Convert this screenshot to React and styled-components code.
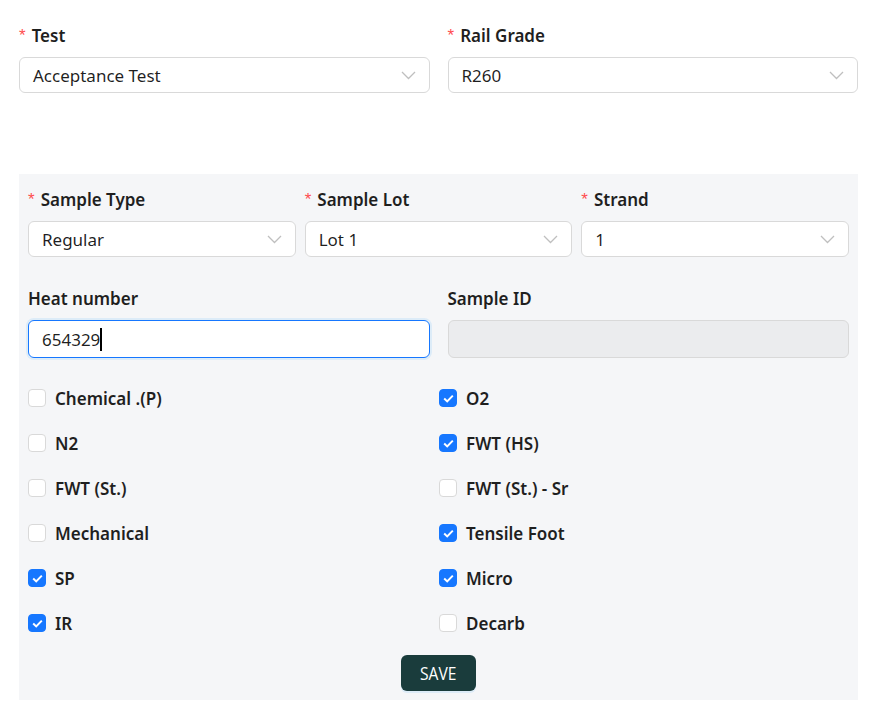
import React from "react";
import styled, { createGlobalStyle } from "styled-components";

const GlobalStyle = createGlobalStyle`
  body {
    margin: 0;
    background: #ffffff;
    font-family: "Noto Sans", "Open Sans", sans-serif;
    color: rgba(0, 0, 0, 0.88);
  }
`;

const checks = [
  { label: "Chemical .(P)", checked: false },
  { label: "O2", checked: true },
  { label: "N2", checked: false },
  { label: "FWT (HS)", checked: true },
  { label: "FWT (St.)", checked: false },
  { label: "FWT (St.) - Sr", checked: false },
  { label: "Mechanical", checked: false },
  { label: "Tensile Foot", checked: true },
  { label: "SP", checked: true },
  { label: "Micro", checked: true },
  { label: "IR", checked: true },
  { label: "Decarb", checked: false },
];

const Chevron = () => (
  <svg width="15" height="14" viewBox="0 0 15 14">
    <polyline
      points="1,4 7.5,10.5 14,4"
      fill="none"
      stroke="#bfbfbf"
      strokeWidth="1.3"
    />
  </svg>
);

const Field = ({ label, required, children }) => (
  <FieldWrap>
    <Label>
      {required && <Star>*</Star>}
      {label}
    </Label>
    {children}
  </FieldWrap>
);

const Select = ({ value }) => (
  <SelectBox>
    <span>{value}</span>
    <Chevron />
  </SelectBox>
);

const Check = ({ label, checked }) => (
  <CheckRow>
    <Box checked={checked}>
      {checked && (
        <svg width="11" height="9" viewBox="0 0 11 9">
          <polyline
            points="1.2,4.6 4.2,7.4 9.8,1.6"
            fill="none"
            stroke="#fff"
            strokeWidth="2"
          />
        </svg>
      )}
    </Box>
    <CheckLabel>{label}</CheckLabel>
  </CheckRow>
);

const App = () => (
  <>
    <GlobalStyle />
    <Page>
      <TopRow>
        <Field label="Test" required>
          <Select value="Acceptance Test" />
        </Field>
        <Field label="Rail Grade" required>
          <Select value="R260" />
        </Field>
      </TopRow>

      <Panel>
        <ThreeRow>
          <Field label="Sample Type" required>
            <Select value="Regular" />
          </Field>
          <Field label="Sample Lot" required>
            <Select value="Lot 1" />
          </Field>
          <Field label="Strand" required>
            <Select value="1" />
          </Field>
        </ThreeRow>

        <TwoRow>
          <Field label="Heat number">
            <InputBox focused>
              654329
              <Caret />
            </InputBox>
          </Field>
          <Field label="Sample ID">
            <InputBox disabled />
          </Field>
        </TwoRow>

        <CheckGrid>
          {checks.map((c) => (
            <Check key={c.label} label={c.label} checked={c.checked} />
          ))}
        </CheckGrid>

        <Actions>
          <SaveButton>
            <span>SAVE</span>
          </SaveButton>
        </Actions>
      </Panel>
    </Page>
  </>
);

const Page = styled.div`
  width: 839px;
  padding: 24px 37px 0 19px;
`;

const TopRow = styled.div`
  display: grid;
  grid-template-columns: 1fr 1fr;
  gap: 18px;
`;

const FieldWrap = styled.div`
  display: flex;
  flex-direction: column;
`;

const Label = styled.div`
  display: flex;
  align-items: center;
  height: 22px;
  margin-bottom: 11px;
  font-size: 17px;
  font-weight: 600;
  color: #1f1f1f;
`;

const Star = styled.span`
  color: #ff4d4f;
  font-family: "Liberation Sans", sans-serif;
  font-weight: 400;
  font-size: 17px;
  margin-right: 6px;
  position: relative;
  top: 1px;
`;

const SelectBox = styled.div`
  display: flex;
  align-items: center;
  justify-content: space-between;
  box-sizing: border-box;
  height: 36px;
  padding: 0 13px 0 13px;
  background: #ffffff;
  border: 1px solid #d9d9d9;
  border-radius: 6px;
  font-size: 17px;
  color: rgba(0, 0, 0, 0.88);
`;

const Panel = styled.div`
  margin-top: 81px;
  background: #f5f6f8;
  padding: 14px 9px 9px 9px;
`;

const ThreeRow = styled.div`
  display: grid;
  grid-template-columns: 1fr 1fr 1fr;
  gap: 9px;
`;

const TwoRow = styled.div`
  display: grid;
  grid-template-columns: 1fr 1fr;
  gap: 18px;
  margin-top: 30px;
`;

const InputBox = styled.div`
  display: flex;
  align-items: center;
  box-sizing: border-box;
  height: 38px;
  padding: 0 13px;
  font-size: 17px;
  border-radius: 6px;
  border: 1px solid ${(p) => (p.focused ? "#1677ff" : "#d9d9d9")};
  background: ${(p) => (p.disabled ? "#ebecee" : "#ffffff")};
  box-shadow: ${(p) => (p.focused ? "0 0 0 2px rgba(5, 145, 255, 0.1)" : "none")};
  color: rgba(0, 0, 0, 0.88);
`;

const Caret = styled.span`
  display: inline-block;
  width: 2px;
  height: 23px;
  background: #000;
`;

const CheckGrid = styled.div`
  display: grid;
  grid-template-columns: 411px 1fr;
  row-gap: 23px;
  margin-top: 29px;
`;

const CheckRow = styled.div`
  display: flex;
  align-items: center;
  height: 22px;
`;

const Box = styled.span`
  display: inline-flex;
  align-items: center;
  justify-content: center;
  box-sizing: border-box;
  width: 18px;
  height: 18px;
  border-radius: 4px;
  border: 1px solid ${(p) => (p.checked ? "#1677ff" : "#d9d9d9")};
  background: ${(p) => (p.checked ? "#1677ff" : "#ffffff")};
  margin-right: 9px;
`;

const CheckLabel = styled.span`
  font-size: 17px;
  font-weight: 600;
  color: #1f1f1f;
`;

const Actions = styled.div`
  display: flex;
  justify-content: center;
  margin-top: 21px;
`;

const SaveButton = styled.button`
  width: 75px;
  height: 36px;
  border: none;
  border-radius: 6px;
  background: #1a3c3c;
  color: #ffffff;
  font-family: "Open Sans", sans-serif;
  font-size: 19px;
  cursor: pointer;
  box-shadow: 0 2px 0 rgba(5, 145, 255, 0.1);

  span {
    display: inline-block;
    transform: scaleX(0.82);
  }
`;

export default App;
